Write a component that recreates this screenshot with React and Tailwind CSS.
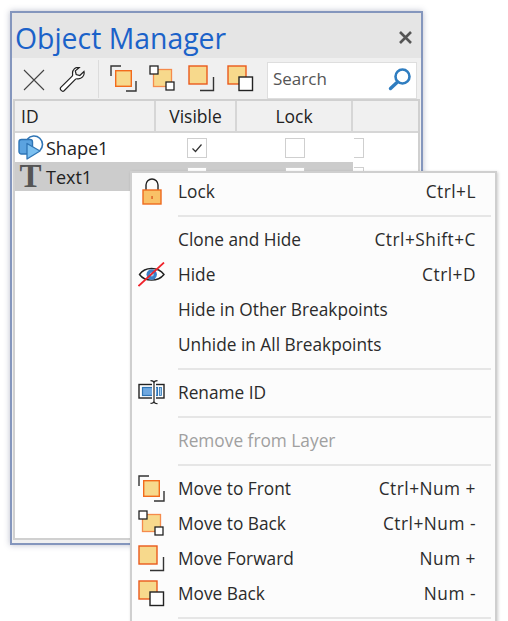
import React from "react";

const font = { fontFamily: '"Open Sans", "Noto Sans", sans-serif' };

function Corner({ d }) {
  return <path d={d} fill="none" stroke="#333" strokeWidth="1.4" />;
}

function FrontIcon() {
  return (
    <svg width="27" height="27" viewBox="0 0 27 27">
      <Corner d="M1 11V1H11" />
      <Corner d="M16 26H26V16" />
      <rect x="5.7" y="5.7" width="15.6" height="15.6" fill="#f7d98c" stroke="#f26b1d" strokeWidth="1.4" />
    </svg>
  );
}

function BackIcon() {
  return (
    <svg width="27" height="27" viewBox="0 0 27 27">
      <rect x="4.5" y="4.5" width="18" height="17" fill="#f7d98c" stroke="#f58b4c" strokeWidth="1.3" />
      <rect x="1" y="1" width="8" height="8" fill="#fff" stroke="#222" strokeWidth="1.3" />
      <rect x="17" y="17" width="8" height="8" fill="#fff" stroke="#222" strokeWidth="1.3" />
    </svg>
  );
}

function ForwardIcon() {
  return (
    <svg width="27" height="27" viewBox="0 0 27 27">
      <Corner d="M12 25.5H25.5V12" />
      <rect x="1" y="1" width="18" height="18" fill="#f7d98c" stroke="#ea5a1c" strokeWidth="1.4" />
    </svg>
  );
}

function MoveBackIcon() {
  return (
    <svg width="27" height="27" viewBox="0 0 27 27">
      <rect x="1" y="1" width="18" height="18" fill="#f7d98c" stroke="#ea5a1c" strokeWidth="1.4" />
      <rect x="12" y="12" width="13.5" height="13.5" fill="#fff" stroke="#222" strokeWidth="1.4" />
    </svg>
  );
}

function CloseIcon() {
  return (
    <svg width="22" height="22" viewBox="0 0 22 22">
      <path d="M1 1l20 20M21 1L1 21" stroke="#444" strokeWidth="1.1" fill="none" />
    </svg>
  );
}

function WrenchIcon() {
  return (
    <svg width="27" height="26" viewBox="0 0 27 26">
      <path
        d="M25 4.5l-4.2 4-3.6-1-.9-3.6L20.3 0.5C16.5-.2 13 2.8 13.6 7.2c.1.8.1 1.4-.4 1.9L1.8 20.4c-1.6 1.8 1.5 5 3.3 3.3L16.6 12.2c.5-.5 1.1-.5 1.9-.4 4 .5 7.4-3 6.5-7.3z"
        fill="#fff"
        stroke="#222"
        strokeWidth="1.2"
      />
    </svg>
  );
}

function SearchIcon() {
  return (
    <svg width="24" height="24" viewBox="0 0 24 24">
      <circle cx="14.5" cy="9.5" r="7" fill="#fff" stroke="#2f7dc0" strokeWidth="2.6" />
      <path d="M9.5 15L2.5 21.5" stroke="#2f7dc0" strokeWidth="3.4" strokeLinecap="round" />
    </svg>
  );
}

function ShapeIcon() {
  return (
    <svg width="26" height="25" viewBox="0 0 26 25">
      <rect x="1" y="4.5" width="13.5" height="14.5" rx="2.5" fill="#5ba3e0" stroke="#2f75b5" strokeWidth="1.4" />
      <path d="M9.5 4a8.5 8.5 0 1 1 12.5 11.5" fill="none" stroke="#2f75b5" strokeWidth="1.6" />
      <path d="M9 8.5L22 16 9 24z" fill="#7cc0f0" stroke="#2f75b5" strokeWidth="1.3" strokeLinejoin="round" />
    </svg>
  );
}

function LockIcon() {
  return (
    <svg width="20" height="27" viewBox="0 0 20 27" className="ml-[4px]">
      <path d="M4 13V7a6 6 0 0 1 12 0v6" fill="none" stroke="#222" strokeWidth="1.4" />
      <rect x="1" y="12" width="18" height="14" fill="#f9c167" stroke="#ee6a1f" strokeWidth="1.4" />
      <rect x="9.4" y="18" width="1.3" height="3" fill="#d9531e" />
    </svg>
  );
}

function EyeIcon() {
  return (
    <svg width="27" height="25" viewBox="0 0 27 25">
      <path d="M1.5 12.5C7 4.5 20 4.5 26 12.5 20 20 7 20 1.5 12.5z" fill="#fff" stroke="#222" strokeWidth="1.4" />
      <circle cx="13.7" cy="12.5" r="5.2" fill="#3a80c8" />
      <circle cx="13.7" cy="12.5" r="2" fill="#a3cbec" />
      <path d="M.5 24L26 .5" stroke="#f0222a" strokeWidth="1.7" />
    </svg>
  );
}

function RenameIcon() {
  return (
    <svg width="28" height="25" viewBox="0 0 28 25">
      <rect x="1" y="4.5" width="25" height="13.5" fill="#fff" stroke="#222" strokeWidth="1.4" />
      <rect x="4.5" y="7.5" width="15" height="8" fill="#6fa8e0" stroke="#2f75b5" strokeWidth="1.2" />
      <rect x="21.5" y="7.5" width="2" height="8" fill="#a3cbec" stroke="#2f75b5" strokeWidth="0.8" />
      <path d="M16 3v18" stroke="#fff" strokeWidth="4" />
      <path d="M12.5.7c2 0 3.5.8 3.5 2.6v17.4c0 1.8-1.5 2.6-3.5 2.6M19.5.7c-2 0-3.5.8-3.5 2.6M19.5 23.7c-2 0-3.5-.8-3.5-2.6" fill="none" stroke="#222" strokeWidth="1.2" />
    </svg>
  );
}

function Checkbox({ checked }) {
  return (
    <div className="flex h-[20px] w-[20px] shrink-0 items-center justify-center border border-[#cfcfcf] bg-white">
      {checked && (
        <svg width="12" height="10" viewBox="0 0 12 10">
          <path d="M1.5 5.5l3 3 6-7" fill="none" stroke="#333" strokeWidth="1.2" />
        </svg>
      )}
    </div>
  );
}

function ObjectRow({ icon, name, checked, selected }) {
  return (
    <div className="flex h-[29px] items-center">
      <div className={`flex h-full w-[338px] shrink-0 items-center ${selected ? "bg-[#cccccc]" : ""}`}>
        <div className="flex w-[31px] shrink-0 items-center justify-center">{icon}</div>
        <span className="w-[110px] shrink-0 text-[18px] leading-none text-[#222]">{name}</span>
        <div className="flex w-[81px] shrink-0 justify-center">
          <Checkbox checked={checked} />
        </div>
        <div className="flex w-[116px] shrink-0 justify-center">
          <Checkbox />
        </div>
      </div>
      <div className="ml-px w-[10px] shrink-0 overflow-hidden">
        <div className="ml-[-10px]">
          <Checkbox />
        </div>
      </div>
    </div>
  );
}

function MenuItem({ icon, label, shortcut, disabled }) {
  return (
    <div className="flex h-[35px] items-center">
      <div className="flex w-[46px] shrink-0 pl-[6px]">{icon}</div>
      <span className={`text-[17.3px] ${disabled ? "text-[#a0a0a0]" : "text-[#2b2b2b]"}`}>{label}</span>
      {shortcut && <span className="ml-auto pr-[19px] text-[17.3px] tracking-[0.5px] text-[#2b2b2b]">{shortcut}</span>}
    </div>
  );
}

function Sep() {
  return (
    <div className="flex h-[13px] items-center pl-[46px] pr-[4px]">
      <div className="h-[2px] w-full bg-[#e6e6e6]" />
    </div>
  );
}

export default function App() {
  return (
    <div className="relative h-[621px] w-[508px] overflow-hidden bg-white" style={font}>
      <div className="ml-[10px] mt-[11px] h-[534px] w-[413px] border-2 border-[#8496bd] bg-[#f0f0f0] shadow-[0_0_6px_rgba(60,70,110,0.35)]">
        <div className="flex h-[45px] items-center justify-between bg-[#e5e5e5] pl-[3px] pr-[9px]">
          <span className="pt-[5px] text-[28.4px] leading-none text-[#1b62c9]">Object Manager</span>
          <svg width="13" height="13" viewBox="0 0 13 13" className="mt-[3px]">
            <path d="M1 1l11 11M12 1L1 12" stroke="#555" strokeWidth="2.6" />
          </svg>
        </div>

        <div className="flex h-[41px] items-center">
          <div className="ml-[11px] mt-[2px]">
            <CloseIcon />
          </div>
          <div className="ml-[14px] mt-[2px]">
            <WrenchIcon />
          </div>
          <div className="ml-[12px] h-[38px] w-px bg-[#dcdcdc]" />
          <div className="ml-[11px] flex gap-[12px]">
            <FrontIcon />
            <BackIcon />
            <ForwardIcon />
            <MoveBackIcon />
          </div>
          <div className="ml-[13px] mt-[3px] flex h-[37px] w-[150px] items-center justify-between border border-[#dedede] bg-white pl-[5px] pr-[4px]">
            <span className="pb-[2px] text-[17px] text-[#555]">Search</span>
            <div className="mb-[3px]">
              <SearchIcon />
            </div>
          </div>
        </div>

        <div className="ml-px mr-px flex h-[441px] flex-col border-2 border-[#d0d0d0] bg-white">
          <div className="flex h-[32px] shrink-0 border-b-2 border-[#d6d6d6] bg-[#f0f0f0] text-[17.5px] text-[#222]">
            <div className="flex w-[141px] items-center border-r-2 border-[#d6d6d6] pl-[6px]">ID</div>
            <div className="flex w-[81px] items-center justify-center border-r-2 border-[#d6d6d6]">Visible</div>
            <div className="flex w-[116px] items-center justify-center border-r-2 border-[#d6d6d6]">Lock</div>
          </div>
          <ObjectRow icon={<ShapeIcon />} name="Shape1" checked />
          <ObjectRow
            icon={
              <span className="text-[33px] leading-[29px] font-bold text-[#555]" style={{ fontFamily: '"Liberation Serif", serif' }}>
                T
              </span>
            }
            name="Text1"
            selected
          />
        </div>
      </div>

      <div className="absolute left-[130px] top-[171px] h-[460px] w-[367px] border-2 border-[#cfcfcf] bg-[#fcfcfc] pt-[1px] shadow-[1px_1px_3px_rgba(0,0,0,0.2)]">
        <MenuItem icon={<LockIcon />} label="Lock" shortcut="Ctrl+L" />
        <Sep />
        <MenuItem label="Clone and Hide" shortcut="Ctrl+Shift+C" />
        <MenuItem icon={<EyeIcon />} label="Hide" shortcut="Ctrl+D" />
        <MenuItem label="Hide in Other Breakpoints" />
        <MenuItem label="Unhide in All Breakpoints" />
        <Sep />
        <MenuItem icon={<RenameIcon />} label="Rename ID" />
        <Sep />
        <MenuItem label="Remove from Layer" disabled />
        <Sep />
        <MenuItem icon={<FrontIcon />} label="Move to Front" shortcut="Ctrl+Num +" />
        <MenuItem icon={<BackIcon />} label="Move to Back" shortcut="Ctrl+Num -" />
        <MenuItem icon={<ForwardIcon />} label="Move Forward" shortcut="Num +" />
        <MenuItem icon={<MoveBackIcon />} label="Move Back" shortcut="Num -" />
        <Sep />
      </div>
    </div>
  );
}
